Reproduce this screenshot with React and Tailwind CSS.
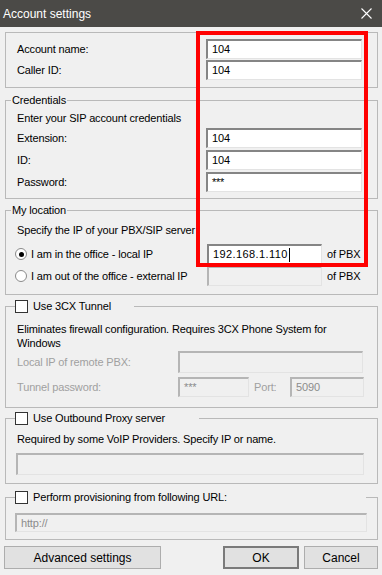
import { useState } from 'react';

function TextBox({ value, disabled, className = '', muted, caret }) {
  return (
    <div
      className={`flex items-center h-full border-t-2 border-l-2 border-b border-r pl-[4px] whitespace-nowrap overflow-hidden ${
        disabled
          ? 'bg-[#f0f0f0] border-t-[#b5b5b5] border-l-[#b5b5b5] border-b-[#e3e3e3] border-r-[#e3e3e3]'
          : 'bg-white border-t-[#858585] border-l-[#858585] border-b-[#e3e3e3] border-r-[#e3e3e3]'
      } ${muted ? 'text-[#8c8c8c]' : 'text-black'} ${className}`}
    >
      {value}
      {caret && <span className="inline-block w-px h-[14px] bg-black ml-px" />}
    </div>
  );
}

function CheckBox() {
  return <span className="inline-block w-[13px] h-[13px] bg-white border border-[#333333] shrink-0" />;
}

function Radio({ checked }) {
  return (
    <span className="flex items-center justify-center w-[12px] h-[12px] rounded-full bg-white border border-[#8a8a8a] shrink-0">
      {checked && <span className="w-[5px] h-[5px] rounded-full bg-black" />}
    </span>
  );
}

function GroupBox({ title, check, legendWidth, className = '', children }) {
  return (
    <div className={`relative border border-[#b9b9b9] ${className}`}>
      {title && !check && (
        <span className="absolute left-[5px] -top-[9px] h-[16px] leading-[16px] px-px bg-[#f0f0f0]">{title}</span>
      )}
      {check && (
        <span
          className="absolute left-[9px] -top-[9px] h-[16px] flex items-center gap-[5px] bg-[#f0f0f0]"
          style={{ width: legendWidth }}
        >
          <CheckBox />
          <span className="leading-[16px] whitespace-nowrap">{title}</span>
        </span>
      )}
      {children}
    </div>
  );
}

function Row({ label, children, labelWidth, className = '', gray }) {
  return (
    <div className={`flex items-center ${className}`}>
      <span className={`shrink-0 whitespace-nowrap ${gray ? 'text-[#a0a0a0]' : ''}`} style={{ width: labelWidth }}>
        {label}
      </span>
      {children}
    </div>
  );
}

export default function App() {
  const [location] = useState('local');

  return (
    <div className="w-[382px] h-[575px] bg-[#f0f0f0] text-black text-[11px] tracking-[-0.15px] font-['Liberation_Sans',Arial,sans-serif] relative overflow-hidden">
      <div className="h-[27px] bg-[#4b4a47] flex items-center pl-[3px] pr-[10px] text-white">
        <span className="text-[12px] tracking-normal">Account settings</span>
        <svg className="ml-auto" width="11" height="11" viewBox="0 0 11 11">
          <path d="M0.5 0.5 L10.5 10.5 M10.5 0.5 L0.5 10.5" stroke="#ffffff" strokeWidth="1.1" />
        </svg>
      </div>

      <div className="pl-[5px] pr-[4px] flex flex-col">
        <GroupBox className="mt-[5px] pt-[6px] pb-[7px] pl-[11px] flex flex-col gap-[1px]">
          <Row label="Account name:" labelWidth={189} className="h-[20px]">
            <TextBox value="104" className="w-[156px]" />
          </Row>
          <Row label="Caller ID:" labelWidth={189} className="h-[20px]">
            <TextBox value="104" className="w-[156px]" />
          </Row>
        </GroupBox>

        <GroupBox title="Credentials" className="mt-[12px] pt-[9px] pb-[6px] pl-[11px] flex flex-col">
          <div className="h-[16px] leading-[16px]">Enter your SIP account credentials</div>
          <div className="mt-[2px] flex flex-col gap-[2px]">
            <Row label="Extension:" labelWidth={189} className="h-[20px]">
              <TextBox value="104" className="w-[156px]" />
            </Row>
            <Row label="ID:" labelWidth={189} className="h-[20px]">
              <TextBox value="104" className="w-[156px]" />
            </Row>
            <Row label="Password:" labelWidth={189} className="h-[20px]">
              <TextBox value="***" className="w-[156px] text-[11px] text-[#1c2a6b] tracking-[-0.3px]" />
            </Row>
          </div>
        </GroupBox>

        <GroupBox title="My location" className="mt-[11px] pt-[11px] pb-[8px] flex flex-col">
          <div className="h-[16px] leading-[16px] pl-[11px]">Specify the IP of your PBX/SIP server</div>
          <div className="mt-[6px] flex flex-col gap-[2px]">
            <div className="flex items-center h-[20px]">
              <div className="flex items-center w-[201px] pl-[9px] gap-[4px]">
                <Radio checked={location === 'local'} />
                <span className="whitespace-nowrap">I am in the office - local IP</span>
              </div>
              <TextBox value="192.168.1.110" caret className="w-[115px] tracking-[0.4px]" />
              <span className="ml-[5px]">of PBX</span>
            </div>
            <div className="flex items-center h-[20px]">
              <div className="flex items-center w-[201px] pl-[9px] gap-[4px]">
                <Radio checked={location === 'external'} />
                <span className="whitespace-nowrap">I am out of the office - external IP</span>
              </div>
              <TextBox value="" disabled className="w-[115px]" />
              <span className="ml-[5px]">of PBX</span>
            </div>
          </div>
        </GroupBox>

        <GroupBox title="Use 3CX Tunnel" check legendWidth={119} className="mt-[11px] pt-[15px] pb-[10px] pl-[11px] flex flex-col">
          <div className="leading-[14px] whitespace-nowrap">
            Eliminates firewall configuration. Requires 3CX Phone System for
            <br />
            Windows
          </div>
          <Row label="Local IP of remote PBX:" labelWidth={161} gray className="mt-[1px] h-[22px]">
            <TextBox value="" disabled className="w-[185px]" />
          </Row>
          <Row label="Tunnel password:" labelWidth={161} gray className="mt-[4px] h-[20px]">
            <TextBox value="***" disabled muted className="w-[71px]" />
            <span className="ml-[5px] w-[36px] text-[#a0a0a0]">Port:</span>
            <TextBox value="5090" disabled muted className="w-[74px] text-[#6d6d6d]" />
          </Row>
        </GroupBox>

        <GroupBox title="Use Outbound Proxy server" check legendWidth={184} className="mt-[10px] pt-[12px] pb-[8px] flex flex-col">
          <div className="h-[16px] leading-[16px] pl-[11px]">Required by some VoIP Providers. Specify IP or name.</div>
          <div className="mt-[6px] pl-[10px] h-[22px]">
            <TextBox value="" disabled className="w-[348px]" />
          </div>
        </GroupBox>

        <GroupBox
          title="Perform provisioning from following URL:"
          check
          legendWidth={351}
          className="mt-[13px] pt-[15px] pb-[7px] flex flex-col"
        >
          <div className="pl-[9px] h-[19px]">
            <TextBox value="http://" disabled muted className="w-[352px] pl-[3px]" />
          </div>
        </GroupBox>

        <div className="mt-[6px] -ml-px flex h-[23px]">
          <button className="w-[157px] h-full bg-[#e1e1e1] border border-[#adadad] text-[12px] tracking-normal">
            Advanced settings
          </button>
          <button className="ml-auto w-[76px] h-full bg-[#e1e1e1] border-2 border-[#7a7a7a] text-[12px] tracking-normal">
            OK
          </button>
          <button className="ml-[5px] w-[74px] h-full bg-[#e1e1e1] border border-[#adadad] text-[12px] tracking-normal">
            Cancel
          </button>
        </div>
      </div>

      <div className="absolute left-[196px] top-[31px] w-[172px] h-[236px] border-[4px] border-[#ff0000] pointer-events-none" />
    </div>
  );
}
